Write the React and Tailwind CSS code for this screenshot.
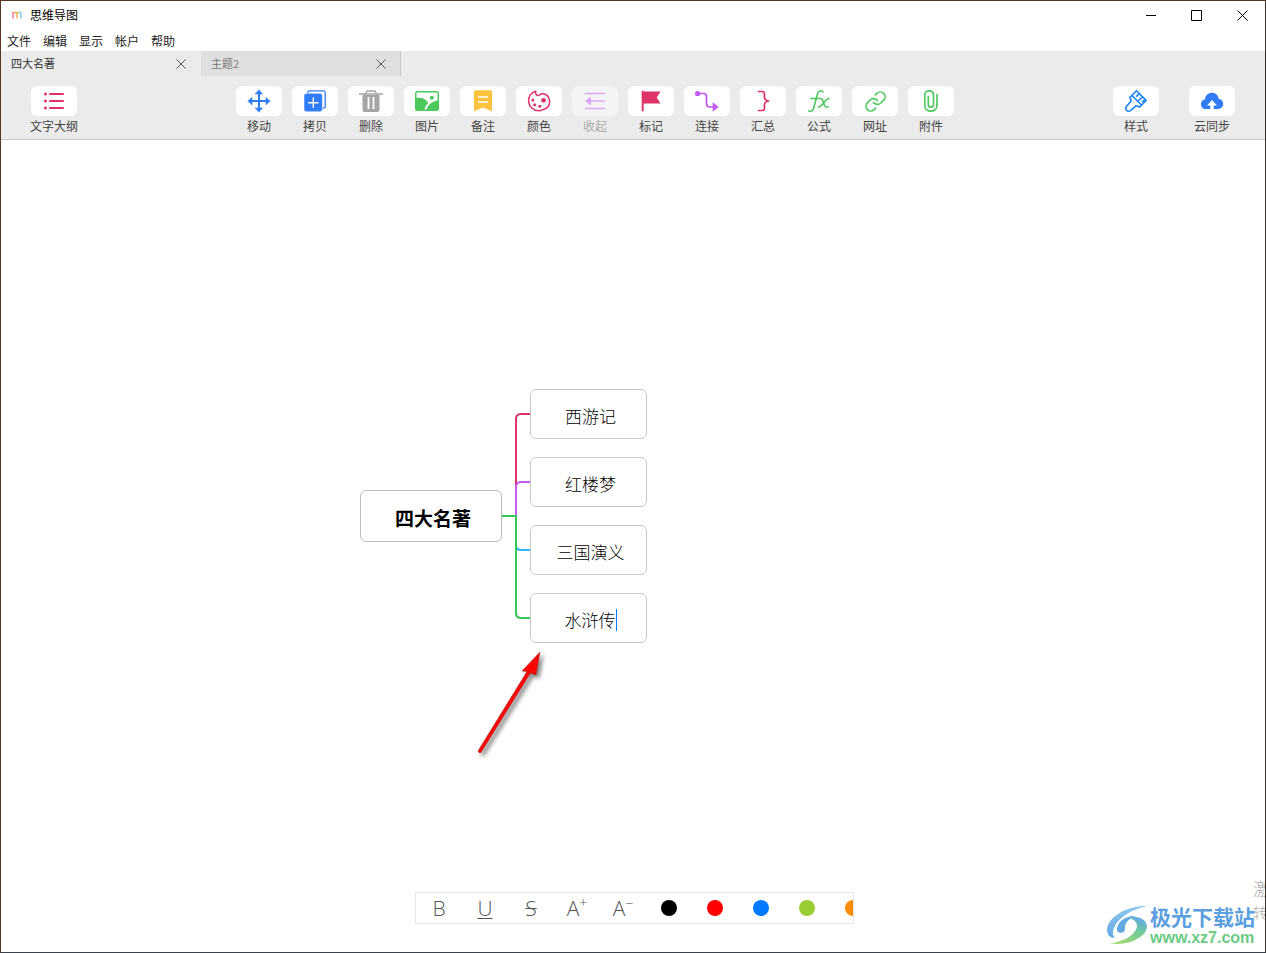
import { useState } from "react";
import { Link } from "lucide-react";

const menus = ["文件", "编辑", "显示", "帐户", "帮助"];

const swatches = [
  { name: "黑色", className: "bg-black" },
  { name: "红色", className: "bg-[#ff0000]" },
  { name: "蓝色", className: "bg-[#007aff]" },
  { name: "绿色", className: "bg-[#9acd32]" },
  { name: "橙色", className: "bg-[#ff8c00]" },
];

function Icon({ children }) {
  return (
    <svg width="24" height="24" viewBox="0 0 24 24" fill="none" strokeLinecap="round" strokeLinejoin="round" aria-hidden="true">
      {children}
    </svg>
  );
}

const outlineIcon = (
  <Icon>
    <g fill="#df3268">
      <circle cx="3.5" cy="5" r="1.5" />
      <circle cx="3.5" cy="12" r="1.5" />
      <circle cx="3.5" cy="19" r="1.5" />
    </g>
    <path d="M8 5H21M8 12H21M8 19H21" stroke="#df3268" strokeWidth="2" />
  </Icon>
);

const tools = [
  {
    label: "移动",
    icon: (
      <Icon>
        <path d="M12 3V21M3 12H21" stroke="#2f7cf6" strokeWidth="2" />
        <path d="M12 1L15.5 5H8.5ZM12 23L15.5 19H8.5ZM1 12L5 8.5V15.5ZM23 12L19 8.5V15.5Z" fill="#2f7cf6" stroke="#2f7cf6" strokeWidth="0.6" />
      </Icon>
    ),
  },
  {
    label: "拷贝",
    icon: (
      <Icon>
        <path d="M5 4V3.500Q5 1.800 6.700 1.800H20.500Q22.200 1.800 22.200 3.500V17.500Q22.200 19.200 20.500 19.200H20" stroke="#2f7cf6" strokeWidth="1.3" />
        <rect x="1" y="4.3" width="18.4" height="18.4" rx="2.5" fill="#2f7cf6" stroke="#fff" strokeWidth="0.5" />
        <path d="M10.300 9V18.400M5.600 13.700H15" stroke="#fff" strokeWidth="1.4" />
      </Icon>
    ),
  },
  {
    label: "删除",
    icon: (
      <Icon>
        <path d="M0.5 5H23.5" stroke="#a5a5a5" strokeWidth="1.6" />
        <path d="M6.5 5L8 2H16L17.5 5" stroke="#a5a5a5" strokeWidth="1.4" />
        <path d="M3.5 6H20.5V20.5Q20.5 23 18 23H6Q3.5 23 3.5 20.5Z" fill="#a5a5a5" />
        <path d="M9.5 8V20M14.5 8V20" stroke="#fff" strokeWidth="1.8" strokeLinecap="butt" />
      </Icon>
    ),
  },
  {
    label: "图片",
    icon: (
      <Icon>
        <rect x="0" y="2" width="24" height="20" rx="2.5" fill="#4cc95d" />
        <path d="M1.5 4.5Q1.5 3.5 2.5 3.5H21.5Q22.5 3.5 22.5 4.5V11.500C17 12.500 13 15.500 11.500 20.500H9.500C10 17.500 11.500 15.500 13.500 14C10.500 9.500 6 8 1.500 9Z" fill="#fff" />
        <circle cx="16.8" cy="8.7" r="2" fill="#4cc95d" />
      </Icon>
    ),
  },
  {
    label: "备注",
    icon: (
      <Icon>
        <path d="M3 3Q3 1.300 4.700 1.300H19.300Q21 1.300 21 3V22.300L12 18.500L3 22.300Z" fill="#fbc23d" />
        <path d="M7.500 8H16.500M7.500 13H16.500" stroke="#fff" strokeWidth="1.4" />
      </Icon>
    ),
  },
  {
    label: "颜色",
    icon: (
      <Icon>
        <path
          d="M8.800 2.200C3.800 3.500 1 8 1.600 12.800C2.300 18 6.500 21.800 12 21.800C14.500 21.800 16 20.200 18.500 19.500C21.500 18.500 22.800 15.500 22.600 11.500C22.300 7.500 19 4.600 15.500 4.800C13 5 12.300 6.800 10.500 6.500C8.700 6 8.300 4 8.800 2.200Z"
          stroke="#df3268"
          strokeWidth="1.5"
        />
        <g fill="#df3268">
          <circle cx="5.800" cy="11" r="1.500" />
          <circle cx="7.700" cy="15.700" r="1.500" />
          <circle cx="12.800" cy="17.300" r="1.500" />
          <circle cx="16.500" cy="11.300" r="2.400" />
        </g>
      </Icon>
    ),
  },
  {
    label: "收起",
    disabled: true,
    icon: (
      <Icon>
        <path d="M2.500 4.500H21.500M8 12H21.500M2.500 19.500H21.500" stroke="#dca6f5" strokeWidth="1.500" />
        <path d="M2 12L8 7.500V16.500Z" fill="#dca6f5" />
      </Icon>
    ),
  },
  {
    label: "标记",
    icon: (
      <Icon>
        <path d="M2.700 1.700H4.700V2.500H21.500L17.700 8.500L21.500 14.500H4.700V22.300H2.700Z" fill="#df3268" />
      </Icon>
    ),
  },
  {
    label: "连接",
    icon: (
      <Icon>
        <circle cx="2.600" cy="4.500" r="2.600" fill="#bf5af2" />
        <path d="M4 4.500H8.500Q11.500 4.500 11.500 7.500V14.500Q11.500 18 14.500 18H18" stroke="#bf5af2" strokeWidth="1.700" />
        <path d="M17.700 13.200L23.700 18L17.700 22.800Z" fill="#bf5af2" />
      </Icon>
    ),
  },
  {
    label: "汇总",
    icon: (
      <Icon>
        <path d="M7.500 2.500H11Q13.500 2.500 13.500 5V8.500Q13.500 11 17.500 12Q13.500 13 13.500 15.500V19Q13.500 21.500 11 21.500H7.500" stroke="#df3268" strokeWidth="1.700" />
      </Icon>
    ),
  },
  {
    label: "公式",
    icon: (
      <Icon>
        <g stroke="#4cc95d" strokeWidth="1.600">
          <path d="M16 3C14.500 1 11.500 1.500 10.500 5L6.500 19.500C5.700 22 3.500 23 1.800 21.800" />
          <path d="M4 9.500H13.500Q15 9.500 15.600 11L17.500 16.500Q18.300 18.500 21 17.800" />
          <path d="M22 9.500C18 9.500 15.500 18 11.500 18" />
        </g>
      </Icon>
    ),
  },
  { label: "网址", icon: <Link size={23} strokeWidth={1.7} color="#4cc95d" aria-hidden="true" /> },
  {
    label: "附件",
    icon: (
      <Icon>
        <path
          d="M18 5.500V16.500C18 24 5.800 24 5.800 16.500V6C5.800 0.500 14.500 0.500 14.500 6V15.500C14.500 19 9.300 19 9.300 15.500V7.500"
          stroke="#4cc95d"
          strokeWidth="1.700"
        />
      </Icon>
    ),
  },
];

const rightTools = [
  {
    label: "样式",
    icon: (
      <Icon>
        <g stroke="#1683fb" strokeWidth="1.600">
          <path d="M12.500 1.800L22.200 11.500L15.500 18.200Q13.800 17 12.200 16.700L6.500 21.600C3.500 23.500 0.500 20.500 2.400 17.500L7.300 11.800Q7 10.200 5.800 8.500Z" />
          <path d="M8 6.500L17.500 16M15.300 4.600L12.800 7.100M18.500 7.800L15 11.300M21 10.300L18.500 12.800" />
        </g>
      </Icon>
    ),
  },
  {
    label: "云同步",
    icon: (
      <Icon>
        <path d="M6 20C-0.500 20 -0.500 11 5 10.500C5.500 2 17.500 1.500 18.800 10C25 10.500 24.500 20 18 20Z" fill="#2f7cf6" />
        <path d="M12 11L17 16.500H13.700V20.500H10.300V16.500H7Z" fill="#fff" />
      </Icon>
    ),
  },
];

function ToolButton({ label, icon, disabled }) {
  return (
    <button type="button" disabled={disabled} className="flex w-14 flex-col items-center gap-0.5 text-xs text-[#444] disabled:text-[#aaa]">
      <span className={disabled ? "flex h-[30px] w-[46px] items-center justify-center rounded-md bg-[#f4f4f4]" : "flex h-[30px] w-[46px] items-center justify-center rounded-md bg-white"}>
        {icon}
      </span>
      <span className="whitespace-nowrap">{label}</span>
    </button>
  );
}

function CloseIcon() {
  return (
    <svg width="12" height="12" viewBox="0 0 12 12" stroke="#555" strokeWidth="1" aria-hidden="true">
      <path d="M1.500 1.500L10.500 10.500M10.500 1.500L1.500 10.500" />
    </svg>
  );
}

function TitleBar() {
  return (
    <header className="flex h-7 items-center bg-white pl-[10px]">
      <svg width="12" height="12" viewBox="0 0 12 12" fill="none" strokeWidth="1.400" aria-hidden="true">
        <path d="M2 9.500V3" stroke="#f0709a" />
        <path d="M2 5Q2.500 3.300 4.300 3.300Q6 3.300 6 5.500V9.500" stroke="#f6a25c" />
        <path d="M6 5.500Q6 3.300 8.200 3.300" stroke="#d8d25a" />
        <path d="M8 3.300Q10 3.300 10 5.500V9.500" stroke="#6fd0ee" />
      </svg>
      <h1 className="ml-[7px] flex-1 text-xs text-black">思维导图</h1>
      <div className="flex h-full">
        <button type="button" aria-label="最小化" className="flex w-[46px] items-center justify-center">
          <svg width="11" height="11" viewBox="0 0 11 11" stroke="#000"><path d="M0 5.500H10" /></svg>
        </button>
        <button type="button" aria-label="最大化" className="flex w-[45px] items-center justify-center">
          <svg width="11" height="11" viewBox="0 0 11 11" fill="none" stroke="#000"><path d="M0.500 0.500H10.500V10.500H0.500Z" /></svg>
        </button>
        <button type="button" aria-label="关闭" className="flex w-[46px] items-center justify-center">
          <svg width="11" height="11" viewBox="0 0 11 11" stroke="#000"><path d="M0.500 0.500L10.500 10.500M10.500 0.500L0.500 10.500" /></svg>
        </button>
      </div>
    </header>
  );
}

function Node({ children }) {
  return (
    <div className="flex h-[50px] w-[117px] items-center justify-center rounded-md border border-[#c8c8c8] bg-white pt-1 pl-1 text-[17px] leading-6 font-light">
      {children}
    </div>
  );
}

function MindMap() {
  const [editing, setEditing] = useState("水浒传");

  return (
    <div className="flex items-center pt-[249px] pl-[359px] text-black">
      <div className="flex h-[52px] w-[142px] items-center justify-center rounded-md border border-[#bdbdbd] bg-white pt-1 pl-1 text-[19px] leading-6 font-bold">
        四大名著
      </div>
      <svg width="28" height="254" viewBox="0 0 28 254" fill="none" strokeWidth="2" aria-hidden="true">
        <path d="M14 127V30Q14 25 19 25H28" stroke="#df3268" />
        <path d="M14 127V98Q14 93 19 93H28" stroke="#bf5af2" />
        <path d="M14 127V156Q14 161 19 161H28" stroke="#2cb5f8" />
        <path d="M0 127H14V224Q14 229 19 229H28" stroke="#34c759" />
      </svg>
      <div className="flex flex-col gap-[18px]">
        <Node>西游记</Node>
        <Node>红楼梦</Node>
        <Node>三国演义</Node>
        <Node>
          <input
            aria-label="主题"
            className="w-[51px] bg-transparent p-0 outline-none"
            value={editing}
            onChange={(e) => setEditing(e.target.value)}
          />
          <span className="h-[22px] w-px bg-[#007aff]"></span>
        </Node>
      </div>
    </div>
  );
}

function Arrow() {
  return (
    <svg className="absolute top-[506px] left-[469px] drop-shadow-[3px_3px_2px_rgba(0,0,0,0.5)]" width="80" height="114" viewBox="0 0 80 114" aria-hidden="true">
      <path d="M70 6L66 29L60.500 27L11 106.500Q9 108 8 105L57 25.500L52 25Z" fill="#fb0505" stroke="#a33" strokeWidth="0.600" />
    </svg>
  );
}

function FormatBar() {
  return (
    <div className="absolute bottom-7 flex w-full justify-center pl-[3px]">
      <div className="flex h-8 w-[439px] overflow-hidden border border-[#e6e6e6] bg-white font-['Open_Sans','Noto_Sans_CJK_SC',sans-serif] text-[21px] leading-[30px] font-light text-[#555]">
        <button type="button" aria-label="加粗" className="w-[46px] shrink-0">B</button>
        <button type="button" aria-label="下划线" className="w-[46px] shrink-0 underline decoration-1 underline-offset-2">U</button>
        <button type="button" aria-label="删除线" className="w-[46px] shrink-0 line-through decoration-1">S</button>
        <button type="button" aria-label="增大字号" className="flex w-[46px] shrink-0 justify-center">
          A<span className="text-sm leading-5">+</span>
        </button>
        <button type="button" aria-label="减小字号" className="flex w-[46px] shrink-0 justify-center">
          A<span className="text-sm leading-5">−</span>
        </button>
        {swatches.map((s) => (
          <button key={s.name} type="button" aria-label={s.name} className="flex w-[46px] shrink-0 items-center justify-center">
            <span className={`size-4 rounded-full ${s.className}`}></span>
          </button>
        ))}
      </div>
    </div>
  );
}

function Watermark() {
  return (
    <>
      <div className="absolute right-0 bottom-7 w-3 overflow-hidden whitespace-nowrap text-[#aaa]">
        <p className="text-lg leading-6 font-light">激活 Windows</p>
        <p className="text-sm leading-6 font-light">转到“设置”以激活 Windows。</p>
      </div>
      <div className="absolute right-[10px] bottom-1 flex items-center gap-0.5">
        <svg width="42" height="42" viewBox="0 0 42 42" aria-hidden="true">
          <defs>
            <linearGradient id="swoosh" x1="0" y1="0" x2="0" y2="1">
              <stop offset="0" stopColor="#8fc9ee" />
              <stop offset="1" stopColor="#62a8e2" />
            </linearGradient>
            <linearGradient id="leaf" x1="0.700" y1="0" x2="0.300" y2="1">
              <stop offset="0" stopColor="#62aae2" />
              <stop offset="0.450" stopColor="#6ecb9a" />
              <stop offset="1" stopColor="#a5d977" />
            </linearGradient>
          </defs>
          <path d="M41 1C24 0 3 10 1 24C1 30 4 33 9 33C7 31 6 28 8 23C12 13 24 5 41 1Z" fill="url(#swoosh)" />
          <path d="M11 26C10 17 20 10 30 11C24 13 19 17 19 22C20 27 15 30 11 26Z" fill="#62aae2" />
          <path d="M24 13C32 10 41 15 41 22C40 32 22 42 3 38C16 38 30 30 31 21C31 17 28 15 24 13Z" fill="url(#leaf)" />
        </svg>
        <div>
          <p className="text-[21px] leading-6 font-bold text-[#5b9fdf]">极光下载站</p>
          <p className="font-['Liberation_Sans',sans-serif] text-base leading-5 font-bold text-[#6bcb84]">www.xz7.com</p>
        </div>
      </div>
    </>
  );
}

export default function App() {
  return (
    <div className="flex min-h-screen flex-col border border-t-[#5c341d] border-r-[#3b3029] border-b-[#39424c] border-l-[#5c341d] bg-white font-['Noto_Sans_CJK_SC',sans-serif]">
      <TitleBar />

      <nav className="flex h-[22px] items-end bg-white text-xs leading-5 text-[#222]">
        {menus.map((m) => (
          <button key={m} type="button" className="px-1.5">{m}</button>
        ))}
      </nav>

      <div className="border-b border-[#c3c3c3] bg-[#ebebeb]">
        <div className="flex h-[25px] text-[11px]">
          <div className="flex w-[200px] items-center justify-between pr-3.5 pl-2.5 text-[#333]">
            <button type="button">四大名著</button>
            <button type="button" aria-label="关闭标签"><CloseIcon /></button>
          </div>
          <div className="flex w-[200px] items-center justify-between border-r border-[#c8c8c8] bg-[#dfdfdf] pr-[13px] pl-2.5 text-[#777]">
            <button type="button">主题2</button>
            <button type="button" aria-label="关闭标签"><CloseIcon /></button>
          </div>
        </div>
        <div className="flex px-[25px] pt-2.5 pb-[5px]">
          <div className="w-[205px]">
            <ToolButton label="文字大纲" icon={outlineIcon} />
          </div>
          <div className="flex flex-1">
            {tools.map((t) => (
              <ToolButton key={t.label} {...t} />
            ))}
          </div>
          <div className="flex gap-5">
            {rightTools.map((t) => (
              <ToolButton key={t.label} {...t} />
            ))}
          </div>
        </div>
      </div>

      <main className="relative flex-1 overflow-hidden">
        <MindMap />
        <Arrow />
        <FormatBar />
        <Watermark />
      </main>
    </div>
  );
}
